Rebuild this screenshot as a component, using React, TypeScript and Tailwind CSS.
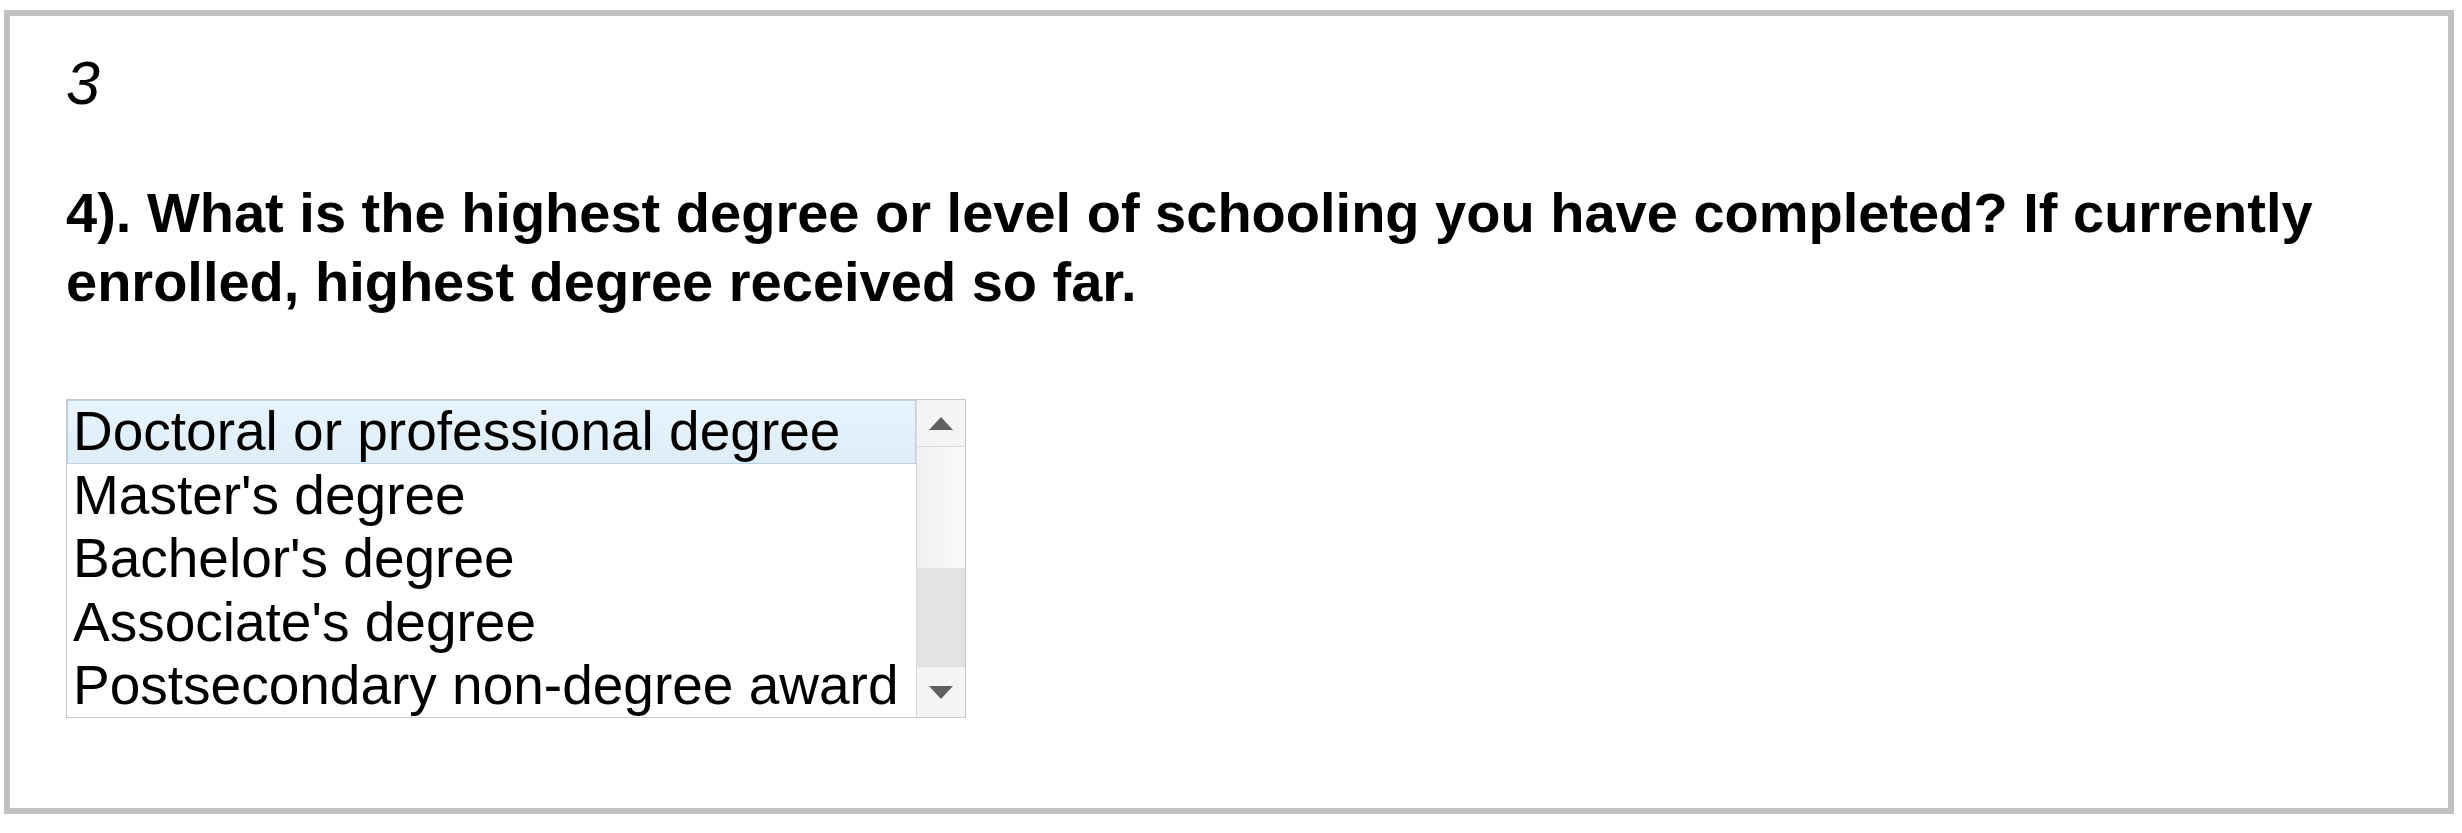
const OPTIONS = [
  "Doctoral or professional degree",
  "Master's degree",
  "Bachelor's degree",
  "Associate's degree",
  "Postsecondary non-degree award",
];

function Arrow({ dir }: { dir: 'up' | 'down' }) {
  return (
    <svg width="24" height="13" viewBox="0 0 24 13">
      {dir === 'up' ? (
        <path d="M12 0L24 13H0z" fill="#606060" />
      ) : (
        <path d="M0 0H24L12 13z" fill="#606060" />
      )}
    </svg>
  );
}

export default function App() {
  return (
    <div className="min-h-screen bg-white pt-[10px] pl-[4px] pr-[8px]">
      <div
        className="h-[804px] border-[6px] border-[#c0c0c0] bg-white pl-[56px] pt-[32px] text-black"
        style={{ fontFamily: '"Liberation Sans", Arial, sans-serif' }}
      >
        <div className="text-[61px] italic leading-[70px]">3</div>

        <h2 className="mt-[60px] w-[2300px] text-[56px] font-bold leading-[69px]">
          4). What is the highest degree or level of schooling you have completed? If currently
          enrolled, highest degree received so far.
        </h2>

        <div className="mt-[83px] flex h-[319px] w-[900px] border border-[#c8c8c8]">
          <ul className="flex-1 text-[55px] leading-[61.5px]">
            {OPTIONS.map((opt, i) => (
              <li
                key={opt}
                className={
                  i === 0
                    ? 'border border-[#bcd3e6] bg-gradient-to-b from-[#e8f4fc] to-[#dfedf8] pl-[5px]'
                    : 'border border-transparent pl-[5px]'
                }
              >
                {opt}
              </li>
            ))}
          </ul>
          <div className="flex w-[49px] flex-col border-l border-[#d9d9d9] bg-gradient-to-r from-[#f0f0f0] to-[#fbfbfb]">
            <div className="flex h-[47px] items-center justify-center border-b border-[#d9d9d9] bg-[#f4f4f4]">
              <Arrow dir="up" />
            </div>
            <div className="h-[121px]" />
            <div className="h-[98px] bg-[#e3e3e3]" />
            <div className="flex flex-1 items-center justify-center border-t border-[#d9d9d9] bg-[#f4f4f4]">
              <Arrow dir="down" />
            </div>
          </div>
        </div>
      </div>
    </div>
  );
}
